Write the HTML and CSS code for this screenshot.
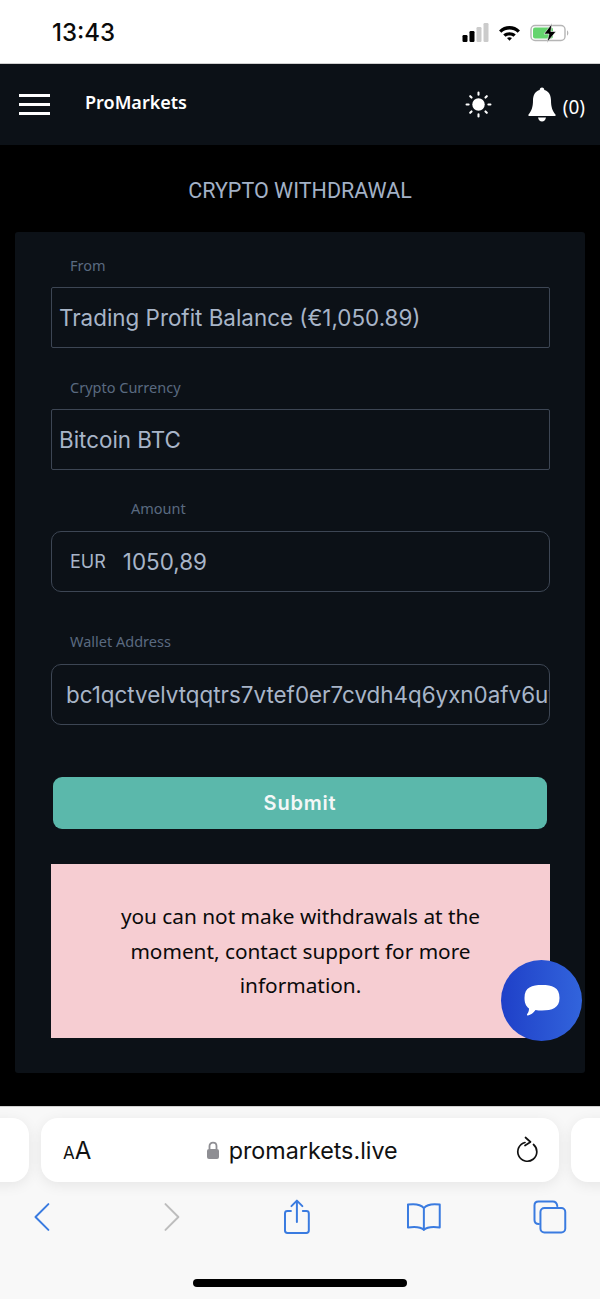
FILE: index.html
```html
<!DOCTYPE html>
<html lang="en">
<head>
    <meta charset="UTF-8">
    <meta name="viewport" content="width=device-width, initial-scale=1.0">
    <title>ProMarkets - Crypto Withdrawal</title>
    <link rel="stylesheet" href="styles.css">
</head>
<body>
    <div id="phone">
        <div class="status-bar">
            <span class="clock">13:43</span>
            <div class="status-icons">
                <svg width="27" height="19" viewBox="0 0 27 19">
                    <rect x="0.500" y="12" width="5" height="7" rx="1.200" fill="#000"/>
                    <rect x="7.500" y="8" width="5" height="11" rx="1.200" fill="#000"/>
                    <rect x="14.500" y="4" width="5" height="15" rx="1.200" fill="#cbcbcb"/>
                    <rect x="21.500" y="0" width="5" height="19" rx="1.200" fill="#cbcbcb"/>
                </svg>
                <svg width="23" height="18" viewBox="0 0 22 17">
                    <path d="M1 6 C6.500 0.500 15.500 0.500 21 6 L18.800 8.300 C14.500 4.200 7.500 4.200 3.200 8.300 Z" fill="#000"/>
                    <path d="M5 10 C8.300 6.900 13.700 6.900 17 10 L14.800 12.200 C12.800 10.400 9.200 10.400 7.200 12.200 Z" fill="#000"/>
                    <path d="M8.600 13.400 C10 12.300 12 12.300 13.400 13.400 L11 16 Z" fill="#000"/>
                </svg>
                <svg width="40" height="20" viewBox="0 0 40 20">
                    <rect x="1" y="2.500" width="34" height="15" rx="4" fill="none" stroke="#b5b5b5" stroke-width="1.400"/>
                    <rect x="3" y="4.500" width="20" height="11" rx="2" fill="#65d46e"/>
                    <path d="M37 7.500 C38.800 8 38.800 12 37 12.500 Z" fill="#b5b5b5"/>
                    <path d="M22 0.500 L14 11 L19 11 L17 19.500 L26 8.500 L20.800 8.500 Z" fill="#000" stroke="#fff" stroke-width="0.600"/>
                </svg>
            </div>
        </div>

        <div id="header">
            <div class="burger"><span></span><span></span><span></span></div>
            <div class="brand">ProMarkets</div>
            <svg class="sun" width="27" height="27" viewBox="0 0 26 26">
                <circle cx="13" cy="13" r="6" fill="#fff"/>
                <g stroke="#fff" stroke-width="2" stroke-linecap="round">
                    <path d="M13 1.500 V3.500 M13 22.500 V24.500 M1.500 13 H3.500 M22.500 13 H24.500 M5 5 L6.300 6.300 M19.700 19.700 L21 21 M5 21 L6.300 19.700 M19.700 6.300 L21 5"/>
                </g>
            </svg>
            <div class="bell-wrap">
                <svg width="28" height="35" viewBox="0 0 28 35">
                    <path d="M14 0.500 C15.500 0.500 16.300 1.600 16.300 3 C21 4.300 23 8.400 23 13.500 C23 20 24.500 24 27.500 27.500 L27.500 29 L0.500 29 L0.500 27.500 C3.500 24 5 20 5 13.500 C5 8.400 7 4.300 11.700 3 C11.700 1.600 12.500 0.500 14 0.500 Z" fill="#fff"/>
                    <path d="M10 30.500 H18 C17.500 33 16 34.500 14 34.500 C12 34.500 10.500 33 10 30.500 Z" fill="#fff"/>
                </svg>
                <span class="count">(0)</span>
            </div>
        </div>

        <div id="main">
            <h1 class="page-title">CRYPTO WITHDRAWAL</h1>
            <div class="card">
                <div class="field">
                    <label>From</label>
                    <div class="input">Trading Profit Balance (€1,050.89)</div>
                </div>
                <div class="field">
                    <label>Crypto Currency</label>
                    <div class="input">Bitcoin BTC</div>
                </div>
                <div class="field amount">
                    <label>Amount</label>
                    <div class="input round"><span class="cur">EUR</span><span>1050,89</span></div>
                </div>
                <div class="field wallet">
                    <label>Wallet Address</label>
                    <div class="input round addr"><span>bc1qctvelvtqqtrs7vtef0er7cvdh4q6yxn0afv6uvgh</span></div>
                </div>
                <div class="submit">Submit</div>
                <div class="alert">you can not make withdrawals at the moment, contact support for more information.</div>
                <div class="chat">
                    <svg width="38" height="34" viewBox="0 0 38 34">
                        <path d="M19 1 C29 1 36.500 3 36.500 14 C36.500 24 29 26.500 19 26.500 C16.500 26.500 14.500 26.400 12.500 26 C10.500 29 7.500 31 5 31.500 C3.500 31.700 3.800 30.300 4.500 29.500 C5.500 28.300 6 26.500 6 24.500 C2.500 22 1.500 18 1.500 14 C1.500 3 9 1 19 1 Z" fill="#fff"/>
                    </svg>
                </div>
            </div>
        </div>

        <div id="safari">
            <div class="tabs">
                <div class="pill side left"></div>
                <div class="pill address">
                    <span class="aa"><small>A</small>A</span>
                    <span class="url">
                        <svg width="14" height="19" viewBox="0 0 14 19">
                            <path d="M3.500 8 V5 C3.500 0.500 10.500 0.500 10.500 5 V8" fill="none" stroke="#8e8e93" stroke-width="1.800"/>
                            <rect x="1" y="8" width="12" height="10" rx="2" fill="#8e8e93"/>
                        </svg>
                        promarkets.live
                    </span>
                    <svg class="reload" width="24" height="28" viewBox="0 0 24 28">
                        <path d="M9 6.500 A9.500 9.500 0 1 0 17.500 8.500" fill="none" stroke="#111" stroke-width="1.700" stroke-linecap="round"/>
                        <path d="M9.500 1.500 L14.500 6 L9 9.500" fill="none" stroke="#111" stroke-width="1.700" stroke-linecap="round" stroke-linejoin="round"/>
                    </svg>
                </div>
                <div class="pill side right"></div>
            </div>
            <div class="toolbar">
                <svg width="18" height="30" viewBox="0 0 18 30"><path d="M15.500 2 L2.500 15 L15.500 28" class="ico"/></svg>
                <svg class="to-next" width="18" height="30" viewBox="0 0 18 30"><path d="M2.500 2 L15.500 15 L2.500 28" class="ico off"/></svg>
                <svg class="to-share" width="28" height="36" viewBox="0 0 28 36">
                    <path d="M8 12 H4.500 C2.800 12 2 13 2 14.500 V31.500 C2 33.200 2.800 34 4.500 34 H23.500 C25.200 34 26 33.200 26 31.500 V14.500 C26 13 25.200 12 23.500 12 H20 M14 23 V2 M8.500 7 L14 1.500 L19.500 7" class="ico"/>
                </svg>
                <svg class="to-book" width="36" height="30" viewBox="0 0 36 30">
                    <path d="M18 6 C15 2.500 9 1.500 2 2.500 V25.500 C9 24.500 15 25 18 28 C21 25 27 24.500 34 25.500 V2.500 C27 1.500 21 2.500 18 6 Z M18 6 V28" class="ico"/>
                </svg>
                <svg class="to-tabs" width="34" height="34" viewBox="0 0 34 34">
                    <path d="M6 24 C3 24 1.500 22.500 1.500 20 V5.500 C1.500 3 3 1.500 5.500 1.500 H20 C22.500 1.500 24 3 24.500 6" class="ico"/>
                    <rect x="7.500" y="8" width="25" height="24.500" rx="4" class="ico"/>
                </svg>
            </div>
            <div class="home-bar"></div>
        </div>
    </div>
</body>
</html>
```

FILE: styles.css
```css
*{
    margin: 0;
    padding: 0;
    box-sizing: border-box;
}
html, body{
    background: #000;
}
#phone{
    width: 600px;
    height: 1299px;
    overflow: hidden;
    font-family: "Noto Sans", "Liberation Sans", sans-serif;
}

/* status bar */
.status-bar{
    height: 64px;
    background: #fff;
    border-bottom: 1px solid #d0d0d0;
    display: flex;
    justify-content: space-between;
    align-items: center;
    padding: 2px 30px 0 52px;
}
.clock{
    font-family: Inter, sans-serif;
    font-size: 24px;
    font-weight: 500;
    color: #0a0a0a;
}
.status-icons{
    display: flex;
    align-items: center;
    gap: 9px;
}

/* header */
#header{
    height: 81px;
    background: #0c1117;
    display: flex;
    align-items: center;
    padding: 0 15px 0 19px;
}
.burger{
    width: 31px;
    display: flex;
    flex-direction: column;
    gap: 6px;
    margin-right: 35px;
}
.burger span{
    display: block;
    height: 3px;
    background: #fff;
}
.brand{
    font-size: 18px;
    font-weight: 600;
    color: #fff;
    margin-bottom: 6px;
    flex: 1;
}
.sun{
    margin-right: 36px;
}
.bell-wrap{
    display: flex;
    align-items: center;
    gap: 7px;
}
.count{
    color: #fff;
    font-size: 19px;
    margin-top: 4px;
}

/* main */
#main{
    height: 961px;
    background: #000;
    padding: 0 15px;
}
.page-title{
    height: 87px;
    line-height: 92px;
    text-align: center;
    font-family: Roboto, sans-serif;
    font-size: 21.500px;
    font-weight: 400;
    color: #a3b1c6;
}
.card{
    height: 841px;
    background: #0c1117;
    border-radius: 3px;
    padding: 21px 35px 0 36px;
    position: relative;
}
.field{
    margin-bottom: 27px;
}
.field label{
    display: block;
    height: 34px;
    line-height: 24px;
    padding-left: 19px;
    font-size: 14.500px;
    color: #5a6a80;
}
.amount label{
    padding-left: 80px;
    height: 35px;
}
.amount{
    margin-bottom: 37px;
    margin-top: -1px;
}
.wallet{
    margin-bottom: 52px;
}
.wallet label{
    height: 35px;
}
.input{
    height: 61px;
    border: 1px solid #3d4654;
    border-radius: 2px;
    display: flex;
    align-items: center;
    padding: 0 7px;
    font-family: Inter, sans-serif;
    font-size: 22.400px;
    color: #a8b5c8;
    white-space: nowrap;
    overflow: hidden;
}
.round{
    border-radius: 10px;
    padding: 0 18px;
}
.addr{
    padding: 0 0 0 14px;
}
.cur{
    font-size: 18px;
    margin-right: 17px;
}
.submit{
    width: 494px;
    height: 52px;
    line-height: 52px;
    margin-left: 2px;
    margin-bottom: 35px;
    background: #5bb8ab;
    border-radius: 9px;
    text-align: center;
    color: #f4f7f7;
    font-family: Inter, sans-serif;
    font-size: 20px;
    font-weight: 600;
    letter-spacing: 0.800px;
}
.alert{
    height: 174px;
    background: #f6cdd2;
    padding: 35px 50px 0;
    text-align: center;
    font-size: 20.800px;
    line-height: 34.500px;
    color: #0a0a0a;
}
.chat{
    position: absolute;
    left: 486px;
    top: 728px;
    width: 81px;
    height: 81px;
    border-radius: 50%;
    background: linear-gradient(90deg, #1f40c8, #3264dc);
    display: flex;
    align-items: center;
    justify-content: center;
}

/* safari bars */
#safari{
    height: 193px;
    background: #f8f8f8;
    border-top: 1px solid #cfcfcf;
}
.tabs{
    display: flex;
    justify-content: center;
    gap: 12px;
    padding-top: 11px;
    margin-left: -80px;
    margin-right: -80px;
}
.pill{
    height: 64px;
    background: #fff;
    border-radius: 17px;
    box-shadow: 0 3px 14px rgba(0, 0, 0, 0.08);
}
.pill.side{
    width: 105px;
}
.pill.address{
    width: 518px;
    display: flex;
    align-items: center;
    justify-content: space-between;
    padding: 0 19px 0 22px;
    color: #111;
}
.aa{
    font-family: Inter, sans-serif;
    font-size: 24px;
}
.aa small{
    font-size: 17px;
}
.url{
    display: flex;
    align-items: center;
    gap: 9px;
    font-family: Inter, sans-serif;
    font-size: 23.300px;
    margin-right: 4px;
}
.toolbar{
    display: flex;
    align-items: center;
    height: 70px;
    padding: 0 33px;
}
.to-next{
    margin-left: 112px;
}
.to-share{
    margin-left: 102px;
}
.to-book{
    margin-left: 95px;
}
.to-tabs{
    margin-left: 92px;
}
.ico{
    fill: none;
    stroke: #3a7be0;
    stroke-width: 2;
    stroke-linecap: round;
    stroke-linejoin: round;
}
.off{
    stroke: #bdbdbd;
}
.home-bar{
    width: 214px;
    height: 8px;
    border-radius: 4px;
    background: #000;
    margin: 27px auto 0;
}
```
